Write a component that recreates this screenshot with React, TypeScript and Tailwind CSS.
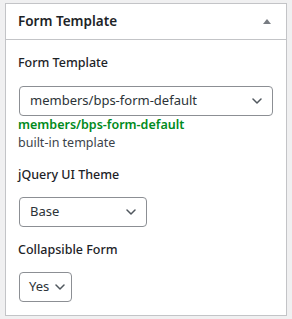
import React from "react"

const font = { fontFamily: '"Noto Sans", "Open Sans", sans-serif' }

const Chevron = () => (
  <svg width="10" height="6" viewBox="0 0 10 6" fill="none" className="shrink-0">
    <path d="M1 1l4 4 4-4" stroke="#50575e" strokeWidth="1.5" strokeLinecap="round" strokeLinejoin="round" />
  </svg>
)

const FakeSelect = ({ value, width, pad = "pl-[10px] pr-[10px]" }: { value: string; width: string; pad?: string }) => (
  <div
    className={`${width} ${pad} h-[30px] ml-px flex items-center justify-between gap-[6px] border border-[#8c8f94] rounded-[4px] bg-white text-[13px] text-[#2c3338] whitespace-nowrap`}
  >
    <span>{value}</span>
    <Chevron />
  </div>
)

const Label = ({ children }: { children: React.ReactNode }) => (
  <div className="h-[20px] leading-[20px] text-[12.5px] font-medium text-[#1d2327]">{children}</div>
)

export default function App() {
  return (
    <div className="w-[292px] h-[319px] bg-[#f0f0f1] pt-[3px] px-[5px]" style={font}>
      <div className="border border-[#c3c4c7] bg-white">
        <div className="h-[36px] flex items-center justify-between px-[12px] border-b border-[#c3c4c7]">
          <span className="text-[13.5px] font-semibold text-[#1d2327]">Form Template</span>
          <svg width="8" height="5" viewBox="0 0 8 5" className="mr-[3px]">
            <path d="M4 0L8 5H0z" fill="#787c82" />
          </svg>
        </div>
        <div className="px-[12px] pt-[13px] pb-[13px] flex flex-col">
          <Label>Form Template</Label>
          <div className="mt-[13px]">
            <FakeSelect value="members/bps-form-default" width="w-[254px]" />
          </div>
          <div className="leading-[18px] text-[12.5px] font-semibold text-[#008a20]">members/bps-form-default</div>
          <div className="leading-[18px] text-[12.5px] text-[#3c434a]">built-in template</div>
          <div className="mt-[13px]">
            <Label>jQuery UI Theme</Label>
          </div>
          <div className="mt-[12px]">
            <FakeSelect value="Base" width="w-[128px]" />
          </div>
          <div className="mt-[13px]">
            <Label>Collapsible Form</Label>
          </div>
          <div className="mt-[12px]">
            <FakeSelect value="Yes" width="w-[53px]" pad="pl-[9px] pr-[8px]" />
          </div>
        </div>
      </div>
    </div>
  )
}
